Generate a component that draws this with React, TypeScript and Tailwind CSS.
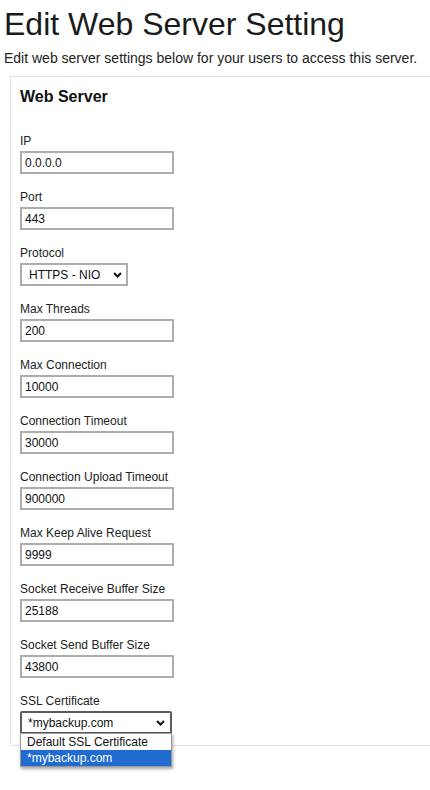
import React from "react";

const fields: { label: string; value: string; kind?: "select" }[] = [
  { label: "IP", value: "0.0.0.0" },
  { label: "Port", value: "443" },
  { label: "Protocol", value: "HTTPS - NIO", kind: "select" },
  { label: "Max Threads", value: "200" },
  { label: "Max Connection", value: "10000" },
  { label: "Connection Timeout", value: "30000" },
  { label: "Connection Upload Timeout", value: "900000" },
  { label: "Max Keep Alive Request", value: "9999" },
  { label: "Socket Receive Buffer Size", value: "25188" },
  { label: "Socket Send Buffer Size", value: "43800" },
];

function Chevron() {
  return (
    <svg width="9" height="6" viewBox="0 0 9 6" className="shrink-0">
      <path d="M1 1 L4.5 4.5 L8 1" fill="none" stroke="#111" strokeWidth="2" />
    </svg>
  );
}

export default function App() {
  return (
    <div
      className="w-[430px] h-[790px] overflow-hidden bg-white text-[#222]"
      style={{ fontFamily: '"Liberation Sans", Arial, sans-serif' }}
    >
      <h1 className="mt-[6px] ml-[4px] text-[32px] leading-[36px] font-normal text-[#1a1a1a] whitespace-nowrap">
        Edit Web Server Setting
      </h1>
      <p className="mt-[6px] ml-[4px] text-[14px] leading-[20px] text-[#222] whitespace-nowrap">
        Edit web server settings below for your users to access this server.
      </p>
      <div className="mt-[8px] ml-[10px] w-[440px] border border-[#e2e2e2] pt-[10px] pl-[9px] pb-[11px]">
        <h2 className="text-[16px] leading-[20px] font-bold text-[#111]">Web Server</h2>
        <div className="mt-[27px] flex flex-col gap-[16px]">
          {fields.map((f) => (
            <div key={f.label} className="flex flex-col">
              <label className="text-[12px] leading-[14px] text-[#222] whitespace-nowrap">{f.label}</label>
              {f.kind === "select" ? (
                <div className="mt-[3px] w-[108px] h-[23px] border-2 border-[#adadad] flex items-center justify-between pl-[7px] pr-[4px] text-[12px] text-[#111]">
                  <span>{f.value}</span>
                  <Chevron />
                </div>
              ) : (
                <input
                  readOnly
                  value={f.value}
                  className="mt-[3px] w-[154px] h-[23px] border-2 border-[#adadad] px-[3px] text-[12px] text-[#111] outline-none"
                  style={{ fontFamily: '"Liberation Sans", Arial, sans-serif' }}
                />
              )}
            </div>
          ))}
          <div className="flex flex-col">
            <label className="text-[12px] leading-[14px] text-[#222]">SSL Certificate</label>
            <div className="relative mt-[3px] w-[152px]">
              <div className="w-[152px] h-[23px] border-2 border-[#5c5c5c] rounded-[2px] flex items-center justify-between pl-[6px] pr-[5px] text-[12px] text-[#111]">
                <span>*mybackup.com</span>
                <Chevron />
              </div>
              <div className="absolute left-0 top-[22px] w-[152px] bg-white border border-[#9a9a9a] shadow-[1px_2px_3px_rgba(0,0,0,0.35)] text-[12px] z-10">
                <div className="h-[16px] leading-[16px] pl-[6px] text-[#111]">Default SSL Certificate</div>
                <div className="h-[16px] leading-[16px] pl-[6px] bg-[#1f6bd0] text-white">*mybackup.com</div>
              </div>
            </div>
          </div>
        </div>
      </div>
    </div>
  );
}
